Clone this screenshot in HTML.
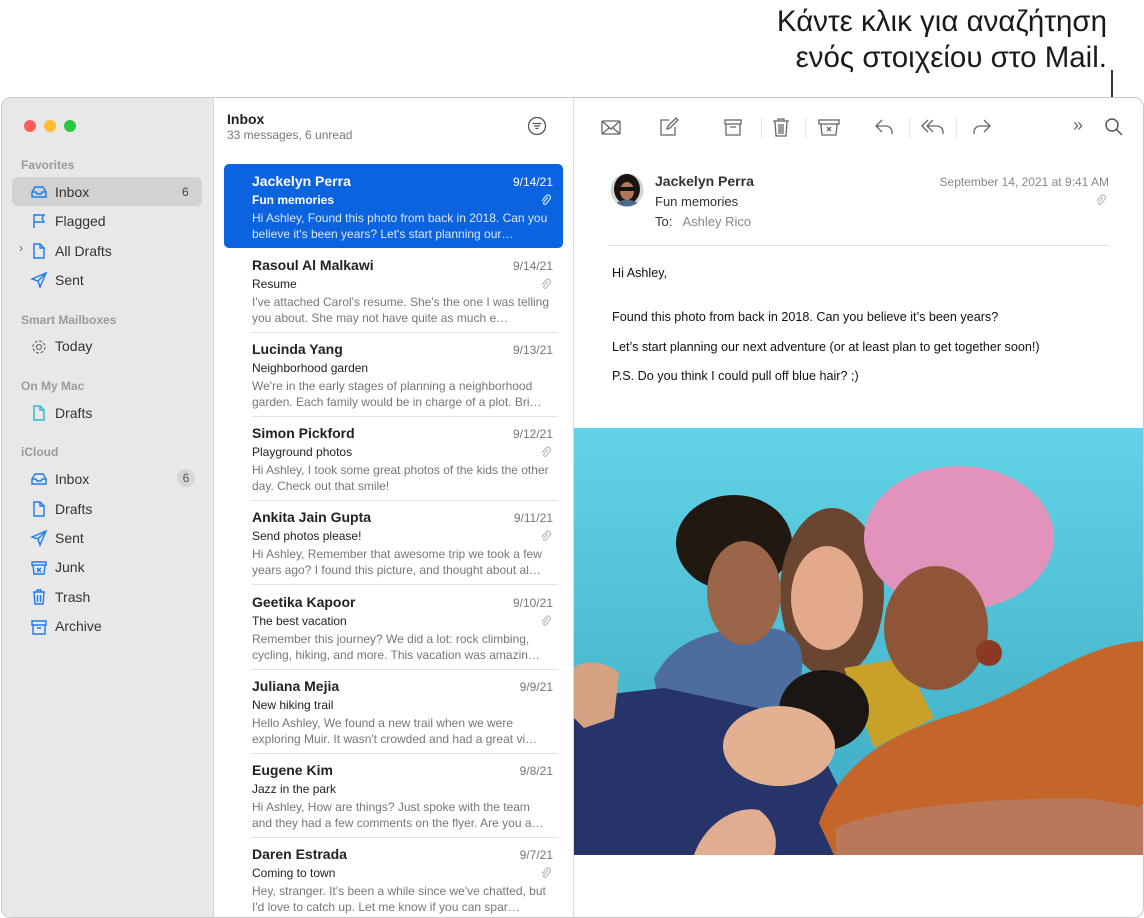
<!DOCTYPE html>
<html><head><meta charset="utf-8"><style>
*{margin:0;padding:0;box-sizing:border-box}
body{width:1144px;height:918px;background:#fff;position:relative;overflow:hidden;font-family:"Liberation Sans",sans-serif;color:#2a2a2a}
.a{position:absolute;white-space:nowrap}
.win{position:absolute;left:1px;top:97px;width:1143px;height:821px;border:1px solid #c8c8c8;border-radius:10px;overflow:hidden;background:#fff}
.side{position:absolute;left:0;top:0;width:212px;height:100%;background:#e8e8e8;border-right:1px solid #d6d6d6}
.list{position:absolute;left:212px;top:0;width:360px;height:100%;background:#fff;border-right:1px solid #dcdcdc}
.sec{position:absolute;left:19px;font-size:12px;color:#9a9a9a;font-weight:bold}
.it{position:absolute;left:53px;font-size:14px;color:#333}
.ic{position:absolute;left:28px;width:18px;height:18px}
.row{position:absolute;left:10px;width:339px;height:84px}
.row .n{position:absolute;left:28px;top:9px;font-size:14px;font-weight:bold;color:#222}
.row .d{position:absolute;right:10px;top:11px;font-size:12px;color:#777}
.row .s{position:absolute;left:28px;top:29px;font-size:12px;color:#222}
.row .p{position:absolute;left:28px;top:46px;font-size:12px;color:#777;line-height:16px;white-space:normal;width:300px}
.row .sep{position:absolute;left:28px;right:5px;bottom:-1px;height:1px;background:#e2e2e2}
.clip{position:absolute;right:12px;top:30px;width:10px;height:12px}
.tb{position:absolute;top:18px}
.bt{font-size:12.6px;color:#111}
</style></head><body>
<div class="a" style="right:37px;top:4px;font-size:29.5px;color:#1a1a1a;text-align:right;line-height:36px">Κάντε κλικ για αναζήτηση<br>ενός στοιχείου στο Mail.</div>
<div class="a" style="left:1111px;top:70px;width:2px;height:44px;background:#333"></div>

<div class="win">
 <div class="side">
  <div class="a" style="left:22px;top:22px;width:12px;height:12px;border-radius:6px;background:#fd5f57"></div>
  <div class="a" style="left:42px;top:22px;width:12px;height:12px;border-radius:6px;background:#febc2e"></div>
  <div class="a" style="left:62px;top:22px;width:12px;height:12px;border-radius:6px;background:#28c840"></div>
  <div class="sec" style="top:60px">Favorites</div>
  <div class="a" style="left:10px;top:79px;width:190px;height:29px;background:#d2d2d2;border-radius:6px"></div>
  <svg class="ic" style="top:85px" viewBox="0 0 18 18" fill="none" stroke="#1a7cf0" stroke-width="1.4"><path d="M2 9l3-5h8l3 5v5H2z M2 9h4l1 2h4l1-2h4"/></svg>
  <div class="it" style="top:86px">Inbox</div><div class="a" style="left:180px;top:87px;font-size:12px;color:#444">6</div>
  <svg class="ic" style="top:114px" viewBox="0 0 18 18" fill="none" stroke="#1a7cf0" stroke-width="1.4"><path d="M4 16V3h10l-2 3.5 2 3.5H4"/></svg>
  <div class="it" style="top:115px">Flagged</div>
  <div class="a" style="left:17px;top:143px;font-size:12px;color:#666">›</div>
  <svg class="ic" style="top:144px" viewBox="0 0 18 18" fill="none" stroke="#1a7cf0" stroke-width="1.4"><path d="M4 2h6l4 4v10H4z M10 2v4h4"/></svg>
  <div class="it" style="top:145px">All Drafts</div>
  <svg class="ic" style="top:173px" viewBox="0 0 18 18" fill="none" stroke="#1a7cf0" stroke-width="1.4"><path d="M2 8L16 2 10 16 8 10z M8 10l8-8"/></svg>
  <div class="it" style="top:174px">Sent</div>
  <div class="sec" style="top:215px">Smart Mailboxes</div>
  <svg class="ic" style="top:240px" viewBox="0 0 18 18" fill="none" stroke="#777" stroke-width="1.3"><circle cx="9" cy="9" r="2.5"/><circle cx="9" cy="9" r="6" stroke-dasharray="3 1.7"/></svg>
  <div class="it" style="top:240px">Today</div>
  <div class="sec" style="top:281px">On My Mac</div>
  <svg class="ic" style="top:306px" viewBox="0 0 18 18" fill="none" stroke="#2ab8c8" stroke-width="1.4"><path d="M4 2h6l4 4v10H4z M10 2v4h4"/></svg>
  <div class="it" style="top:307px">Drafts</div>
  <div class="sec" style="top:347px">iCloud</div>
  <svg class="ic" style="top:372px" viewBox="0 0 18 18" fill="none" stroke="#1a7cf0" stroke-width="1.4"><path d="M2 9l3-5h8l3 5v5H2z M2 9h4l1 2h4l1-2h4"/></svg>
  <div class="it" style="top:373px">Inbox</div>
  <div class="a" style="left:175px;top:371px;width:18px;height:18px;border-radius:9px;background:#d6d6d6;font-size:12px;color:#555;text-align:center;line-height:18px">6</div>
  <svg class="ic" style="top:402px" viewBox="0 0 18 18" fill="none" stroke="#1a7cf0" stroke-width="1.4"><path d="M4 2h6l4 4v10H4z M10 2v4h4"/></svg>
  <div class="it" style="top:403px">Drafts</div>
  <svg class="ic" style="top:431px" viewBox="0 0 18 18" fill="none" stroke="#1a7cf0" stroke-width="1.4"><path d="M2 8L16 2 10 16 8 10z M8 10l8-8"/></svg>
  <div class="it" style="top:432px">Sent</div>
  <svg class="ic" style="top:461px" viewBox="0 0 18 18" fill="none" stroke="#1a7cf0" stroke-width="1.4"><path d="M2 3h14v3H2z M3 6l1 9h10l1-9 M7 9l4 4 M11 9l-4 4"/></svg>
  <div class="it" style="top:461px">Junk</div>
  <svg class="ic" style="top:490px" viewBox="0 0 18 18" fill="none" stroke="#1a7cf0" stroke-width="1.4"><path d="M3 4h12 M7 4V2h4v2 M4 4l1 12h8l1-12 M7.5 7v7 M10.5 7v7"/></svg>
  <div class="it" style="top:491px">Trash</div>
  <svg class="ic" style="top:520px" viewBox="0 0 18 18" fill="none" stroke="#1a7cf0" stroke-width="1.4"><path d="M2 3h14v4H2z M3 7v9h12V7 M7 10h4"/></svg>
  <div class="it" style="top:520px">Archive</div>
 </div>

 <div class="list">
  <div class="a" style="left:13px;top:13px;font-size:14px;font-weight:bold;color:#222">Inbox</div>
  <div class="a" style="left:13px;top:30px;font-size:12px;color:#777">33 messages, 6 unread</div>
  <svg class="a" style="left:313px;top:18px" width="20" height="20" viewBox="0 0 20 20" fill="none" stroke="#555" stroke-width="1.3"><circle cx="10" cy="10" r="8.5"/><path d="M5.5 7.5h9 M7 10h6 M8.5 12.5h3"/></svg>

  <div class="row" style="top:66px;background:#0b63e0;border-radius:5px">
   <div class="n" style="color:#fff">Jackelyn Perra</div><div class="d" style="color:#fff">9/14/21</div>
   <div class="s" style="color:#fff;font-weight:bold">Fun memories</div>
   <svg class="clip" viewBox="0 0 10 12" fill="none" stroke="#cfe0ff" stroke-width="1.2"><path d="M7 3L3 8a1.4 1.4 0 002 2l4-5a2.5 2.5 0 00-4-3L1 7"/></svg>
   <div class="p" style="color:#dbe7ff">Hi Ashley, Found this photo from back in 2018. Can you believe it's been years? Let's start planning our…</div>
  </div>
  <div class="row" style="top:150px"><div class="n">Rasoul Al Malkawi</div><div class="d">9/14/21</div><div class="s">Resume</div><svg class="clip" viewBox="0 0 10 12" fill="none" stroke="#bbb" stroke-width="1.2"><path d="M7 3L3 8a1.4 1.4 0 002 2l4-5a2.5 2.5 0 00-4-3L1 7"/></svg><div class="p">I've attached Carol's resume. She's the one I was telling you about. She may not have quite as much e…</div><div class="sep"></div></div>
  <div class="row" style="top:234px"><div class="n">Lucinda Yang</div><div class="d">9/13/21</div><div class="s">Neighborhood garden</div><div class="p">We're in the early stages of planning a neighborhood garden. Each family would be in charge of a plot. Bri…</div><div class="sep"></div></div>
  <div class="row" style="top:318px"><div class="n">Simon Pickford</div><div class="d">9/12/21</div><div class="s">Playground photos</div><svg class="clip" viewBox="0 0 10 12" fill="none" stroke="#bbb" stroke-width="1.2"><path d="M7 3L3 8a1.4 1.4 0 002 2l4-5a2.5 2.5 0 00-4-3L1 7"/></svg><div class="p">Hi Ashley, I took some great photos of the kids the other day. Check out that smile!</div><div class="sep"></div></div>
  <div class="row" style="top:402px"><div class="n">Ankita Jain Gupta</div><div class="d">9/11/21</div><div class="s">Send photos please!</div><svg class="clip" viewBox="0 0 10 12" fill="none" stroke="#bbb" stroke-width="1.2"><path d="M7 3L3 8a1.4 1.4 0 002 2l4-5a2.5 2.5 0 00-4-3L1 7"/></svg><div class="p">Hi Ashley, Remember that awesome trip we took a few years ago? I found this picture, and thought about al…</div><div class="sep"></div></div>
  <div class="row" style="top:487px"><div class="n">Geetika Kapoor</div><div class="d">9/10/21</div><div class="s">The best vacation</div><svg class="clip" viewBox="0 0 10 12" fill="none" stroke="#bbb" stroke-width="1.2"><path d="M7 3L3 8a1.4 1.4 0 002 2l4-5a2.5 2.5 0 00-4-3L1 7"/></svg><div class="p">Remember this journey? We did a lot: rock climbing, cycling, hiking, and more. This vacation was amazin…</div><div class="sep"></div></div>
  <div class="row" style="top:571px"><div class="n">Juliana Mejia</div><div class="d">9/9/21</div><div class="s">New hiking trail</div><div class="p">Hello Ashley, We found a new trail when we were exploring Muir. It wasn't crowded and had a great vi…</div><div class="sep"></div></div>
  <div class="row" style="top:655px"><div class="n">Eugene Kim</div><div class="d">9/8/21</div><div class="s">Jazz in the park</div><div class="p">Hi Ashley, How are things? Just spoke with the team and they had a few comments on the flyer. Are you a…</div><div class="sep"></div></div>
  <div class="row" style="top:739px"><div class="n">Daren Estrada</div><div class="d">9/7/21</div><div class="s">Coming to town</div><svg class="clip" viewBox="0 0 10 12" fill="none" stroke="#bbb" stroke-width="1.2"><path d="M7 3L3 8a1.4 1.4 0 002 2l4-5a2.5 2.5 0 00-4-3L1 7"/></svg><div class="p">Hey, stranger. It's been a while since we've chatted, but I'd love to catch up. Let me know if you can spar…</div></div>
 </div>

 <div class="a" style="left:572px;top:0;width:571px;height:100%">
  <svg class="tb" style="left:26px" width="22" height="22" viewBox="0 0 22 22" fill="none" stroke="#666" stroke-width="1.3"><rect x="2" y="5" width="18" height="13" rx="1"/><path d="M2 5l9 8 9-8 M2 18l7-6 M20 18l-7-6"/></svg>
  <svg class="tb" style="left:83px" width="22" height="22" viewBox="0 0 22 22" fill="none" stroke="#666" stroke-width="1.3"><path d="M12 4H4v15h14v-8 M10 13l1-3 8-8 2 2-8 8z"/></svg>
  <svg class="tb" style="left:148px" width="22" height="22" viewBox="0 0 22 22" fill="none" stroke="#666" stroke-width="1.3"><rect x="3" y="4" width="16" height="4"/><path d="M4 8v11h14V8 M8 11h6"/></svg>
  <div class="a" style="left:187px;top:20px;width:1px;height:20px;background:#e6e6e6"></div>
  <svg class="tb" style="left:196px" width="22" height="22" viewBox="0 0 22 22" fill="none" stroke="#666" stroke-width="1.3"><path d="M3 5h16 M8 5V3h6v2 M5 5l1 15h10l1-15 M9 8v10 M11 8v10 M13 8v10"/></svg>
  <div class="a" style="left:231px;top:20px;width:1px;height:20px;background:#e6e6e6"></div>
  <svg class="tb" style="left:243px" width="24" height="22" viewBox="0 0 24 22" fill="none" stroke="#666" stroke-width="1.3"><rect x="2" y="4" width="20" height="4"/><path d="M4 8l1 11h14l1-11 M10 11l4 4 M14 11l-4 4"/></svg>
  <svg class="tb" style="left:299px" width="22" height="22" viewBox="0 0 22 22" fill="none" stroke="#666" stroke-width="1.3"><path d="M9 4L3 10l6 6 M3 10h10a6 6 0 016 6v2"/></svg>
  <div class="a" style="left:335px;top:20px;width:1px;height:20px;background:#e6e6e6"></div>
  <svg class="tb" style="left:345px" width="28" height="22" viewBox="0 0 28 22" fill="none" stroke="#666" stroke-width="1.3"><path d="M9 4L3 10l6 6 M14 4L8 10l6 6 M8 10h10a6 6 0 016 6v2"/></svg>
  <div class="a" style="left:382px;top:20px;width:1px;height:20px;background:#e6e6e6"></div>
  <svg class="tb" style="left:397px" width="22" height="22" viewBox="0 0 22 22" fill="none" stroke="#666" stroke-width="1.3"><path d="M13 4l6 6-6 6 M19 10H9a6 6 0 00-6 6v2"/></svg>
  <div class="a" style="left:499px;top:17px;font-size:18px;color:#666">»</div>
  <svg class="tb" style="left:529px" width="22" height="22" viewBox="0 0 22 22" fill="none" stroke="#555" stroke-width="1.5"><circle cx="9" cy="9" r="6"/><path d="M13.5 13.5L19 19"/></svg>

  <svg class="a" style="left:36px;top:75px" width="34" height="34" viewBox="0 0 34 34"><clipPath id="c"><circle cx="17" cy="17" r="16.5"/></clipPath><g clip-path="url(#c)"><rect width="34" height="34" fill="#cfd8d0"/><ellipse cx="17" cy="16" rx="13" ry="15" fill="#1c1410"/><ellipse cx="17" cy="18" rx="7" ry="9" fill="#b07858"/><rect x="9" y="14" width="16" height="4" fill="#111"/><path d="M4 34c2-6 8-7 13-7s11 1 13 7z" fill="#4a6a8a"/></g></svg>
  <div class="a" style="left:81px;top:75px;font-size:14px;font-weight:bold;color:#333">Jackelyn Perra</div>
  <div class="a" style="right:36px;top:77px;font-size:12px;color:#888">September 14, 2021 at 9:41 AM</div>
  <div class="a" style="left:81px;top:96px;font-size:13px;color:#333">Fun memories</div>
  <svg class="a" style="left:522px;top:96px" width="10" height="12" viewBox="0 0 10 12" fill="none" stroke="#bbb" stroke-width="1.2"><path d="M7 3L3 8a1.4 1.4 0 002 2l4-5a2.5 2.5 0 00-4-3L1 7"/></svg>
  <div class="a" style="left:81px;top:116px;font-size:13px;color:#333">To:&nbsp;&nbsp; <span style="color:#888">Ashley Rico</span></div>
  <div class="a" style="left:34px;top:147px;width:500px;height:1px;background:#e2e2e2"></div>
  <div class="a bt" style="left:38px;top:168px">Hi Ashley,</div>
  <div class="a bt" style="left:38px;top:212px">Found this photo from back in 2018. Can you believe it’s been years?</div>
  <div class="a bt" style="left:38px;top:242px">Let’s start planning our next adventure (or at least plan to get together soon!)</div>
  <div class="a bt" style="left:38px;top:271px">P.S. Do you think I could pull off blue hair? ;)</div>

  <svg class="a" style="left:0;top:330px" width="571" height="427" viewBox="0 0 571 427">
   <defs><linearGradient id="bg" x1="0" y1="0" x2="0" y2="1"><stop offset="0" stop-color="#62d3e6"/><stop offset="1" stop-color="#3ba9c2"/></linearGradient></defs>
   <rect width="571" height="427" fill="url(#bg)"/>
   <ellipse cx="160" cy="115" rx="58" ry="48" fill="#221812"/>
   <ellipse cx="258" cy="165" rx="52" ry="85" fill="#6a4530"/>
   <path d="M80 250c20-40 60-50 110-50s40 40 30 90L90 300z" fill="#4d6d9e"/>
   <ellipse cx="170" cy="165" rx="37" ry="52" fill="#9a6548"/>
   <ellipse cx="253" cy="170" rx="36" ry="52" fill="#e2a98a"/>
   <path d="M270 240l60-10 30 60-60 30z" fill="#c9a128"/>
   <ellipse cx="385" cy="110" rx="95" ry="72" fill="#e193bc"/>
   <ellipse cx="362" cy="200" rx="52" ry="62" fill="#8e5539"/>
   <ellipse cx="415" cy="225" rx="13" ry="13" fill="#8a3a24"/>
   <path d="M0 270l90-10 140 30 40 80-10 57H0z" fill="#27346a"/>
   <ellipse cx="250" cy="282" rx="45" ry="40" fill="#1a1614"/>
   <ellipse cx="205" cy="318" rx="56" ry="40" fill="#e3b191"/>
   <path d="M245 395c20-60 70-90 140-110 70-20 120-70 186-72v160l-40 54H260z" fill="#c4652a"/>
   <path d="M262 400c40-20 150-30 250-30l59 10v47H262z" fill="#b9785a"/>
   <path d="M0 240c10-10 35-5 45 5l-5 45-30 10L0 290z" fill="#d4a283"/>
   <path d="M120 427c10-30 40-50 65-45 15 10 20 30 15 45z" fill="#e0ad90"/>
  </svg>
 </div>
</div>
</body></html>
